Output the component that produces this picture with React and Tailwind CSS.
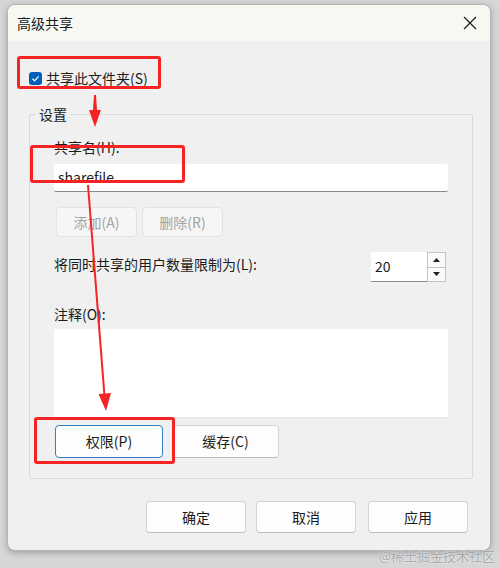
import React from "react";

const font = "font-['Noto_Sans_CJK_SC','Noto_Sans',sans-serif]";

function Btn({ children, className = "" }) {
  return (
    <div
      className={`flex items-center justify-center rounded-[4px] border border-[#d4d4d4] border-b-[#bcbcbc] bg-[#fdfdfd] text-[14px] text-[#1b1b1b] ${className}`}
    >
      {children}
    </div>
  );
}

export default function App() {
  return (
    <div className={`relative w-[500px] h-[568px] overflow-hidden bg-[#d6d6d6] pl-[7px] pt-[4px] ${font}`}>
      <div className="w-[484px] h-[547px] rounded-[8px] border border-[#b4b4b4] bg-[#f0f0f0] overflow-hidden flex flex-col shadow-[0_2px_6px_rgba(0,0,0,0.25)]">
        {/* title bar */}
        <div className="h-[36px] shrink-0 bg-[#f8f8f3] flex items-center justify-between pl-[9px] pr-[12px]">
          <span className="text-[14px] text-[#1a1a1a] leading-[20px]">高级共享</span>
          <svg width="14" height="14" viewBox="0 0 14 14" className="mr-[1px]">
            <path d="M1 1 L13 13 M13 1 L1 13" stroke="#1a1a1a" strokeWidth="1.2" fill="none" />
          </svg>
        </div>
        {/* body */}
        <div className="flex-1 flex flex-col px-[21px] text-[#1b1b1b]">
          <div className="mt-[30px] h-[14px] flex items-center">
            <div className="w-[13px] h-[13px] rounded-[3px] bg-[#005fb8] flex items-center justify-center">
              <svg width="9" height="9" viewBox="0 0 9 9">
                <path d="M1.5 4.8 L3.6 6.8 L7.6 2.4" stroke="#fff" strokeWidth="1.2" fill="none" />
              </svg>
            </div>
            <span className="ml-[4px] text-[14px] leading-[14px]">共享此文件夹(S)</span>
          </div>

          <fieldset className="mt-[19px] w-[441px] border border-[#dadada] rounded-[2px] px-[24px] pb-[20px] flex flex-col">
            <legend className="-ml-[19px] px-[4px] text-[14px] leading-[20px]">设置</legend>
            <div className="mt-[13px] text-[14px] leading-[20px]">共享名(H):</div>
            <div className="mt-[7px] w-[394px] h-[28px] bg-white border-b border-[#8a8a8a] rounded-[2px] flex items-center pl-[4px] text-[14px]">
              sharefile
            </div>
            <div className="mt-[15px] ml-[2px] flex gap-[5px]">
              <div className="w-[81px] h-[30px] rounded-[4px] border border-[#e3e3e3] bg-[#f6f6f6] flex items-center justify-center text-[14px] text-[#a3a3a3]">
                添加(A)
              </div>
              <div className="w-[81px] h-[30px] rounded-[4px] border border-[#e3e3e3] bg-[#f6f6f6] flex items-center justify-center text-[14px] text-[#a3a3a3]">
                删除(R)
              </div>
            </div>
            <div className="mt-[15px] w-[394px] h-[30px] flex items-start justify-between">
              <span className="mt-[2px] text-[14px] leading-[20px]">将同时共享的用户数量限制为(L):</span>
              <div className="mr-[2px] flex h-[30px]">
                <div className="w-[56px] h-[30px] bg-white border-b border-[#8a8a8a] flex items-center pl-[4px] text-[14px]">20</div>
                <div className="w-[19px] h-[30px] border border-[#c4c4c4] bg-[#f0f0f0] flex flex-col">
                  <div className="flex-1 flex items-center justify-center border-b border-[#c4c4c4] bg-[#fafafa]">
                    <svg width="7" height="4" viewBox="0 0 7 4"><path d="M0 4 L3.5 0 L7 4 Z" fill="#222" /></svg>
                  </div>
                  <div className="flex-1 flex items-center justify-center bg-[#fafafa]">
                    <svg width="7" height="4" viewBox="0 0 7 4"><path d="M0 0 L3.5 4 L7 0 Z" fill="#222" /></svg>
                  </div>
                </div>
              </div>
            </div>
            <div className="mt-[22px] text-[14px] leading-[20px]">注释(O):</div>
            <div className="mt-[5px] w-[394px] h-[89px] bg-white border-b border-[#e4e4e4]" />
            <div className="mt-[7px] ml-[1px] flex gap-[9px]">
              <div className="w-[108px] h-[33px] rounded-[4px] border border-[#2f7fc4] bg-[#fdfdfd] flex items-center justify-center text-[14px]">
                权限(P)
              </div>
              <Btn className="w-[107px] h-[33px]">缓存(C)</Btn>
            </div>
          </fieldset>

          <div className="mt-[22px] mr-[1px] flex justify-end">
            <Btn className="w-[100px] h-[32px]">确定</Btn>
            <Btn className="ml-[10px] w-[100px] h-[32px]">取消</Btn>
            <Btn className="ml-[12px] w-[100px] h-[32px]">应用</Btn>
          </div>
        </div>
      </div>

      {/* annotation overlays */}
      <div className="absolute left-[17px] top-[56px] w-[144px] h-[33px] border-[3px] border-[#f42424] rounded-[3px]" />
      <div className="absolute left-[30px] top-[145px] w-[155px] h-[38px] border-[3px] border-[#f42424] rounded-[3px]" />
      <div className="absolute left-[34px] top-[417px] w-[141px] h-[47px] border-[3px] border-[#f42424] rounded-[3px]" />
      <svg className="absolute left-0 top-0" width="500" height="568" viewBox="0 0 500 568">
        <path d="M94 95 L96 95 L97 110 L101 110 L95 127 L89 110 L93 110 Z" fill="#f42424" />
        <line x1="88" y1="185" x2="104.5" y2="396" stroke="#f42424" strokeWidth="2" />
        <path d="M98.5 394 L111 393 L106 411 Z" fill="#f42424" />
      </svg>
      <div className="absolute right-[5px] bottom-[5px] text-[13px] leading-[14px] text-[#a9a9a9] [text-shadow:0_0_2px_#fff]">
        @稀土掘金技术社区
      </div>
    </div>
  );
}
